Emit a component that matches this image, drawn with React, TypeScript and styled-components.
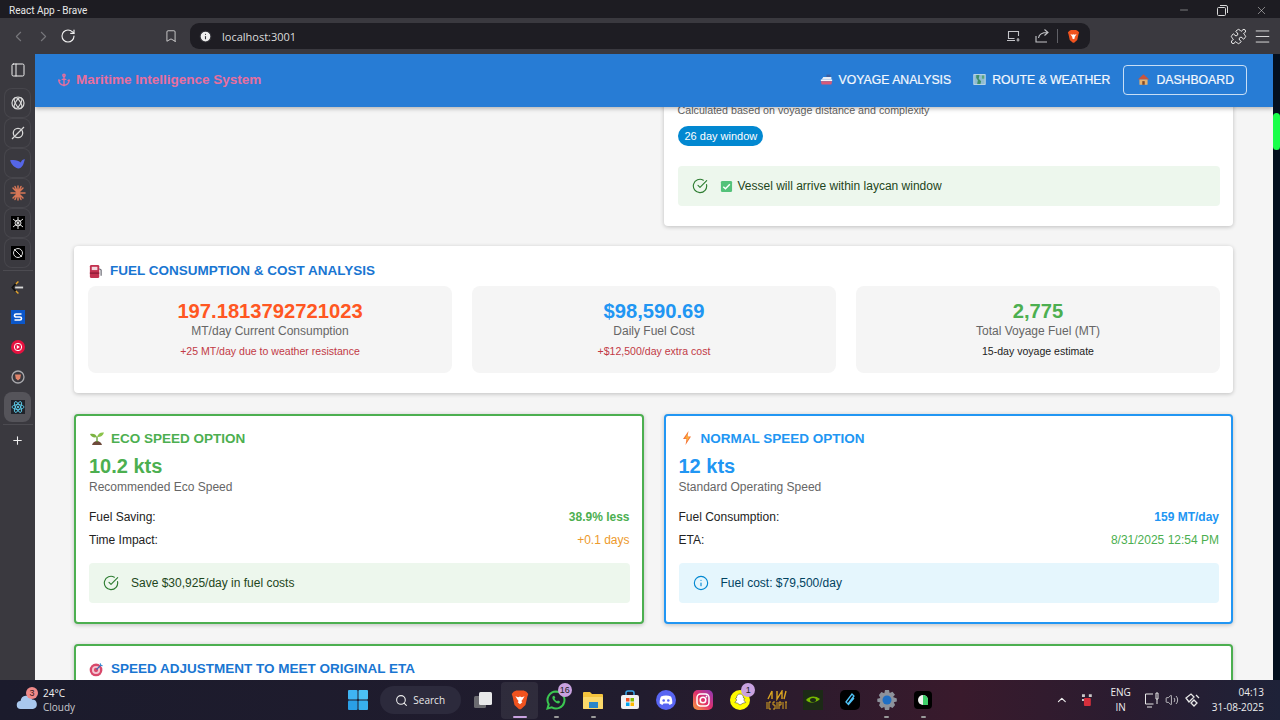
import React from "react"
import styled, { createGlobalStyle } from "styled-components"
import {
  Anchor,
  Bookmark,
  ChevronLeft,
  ChevronRight,
  ChevronUp,
  CircleCheckBig,
  Info,
  Menu,
  Minus,
  PanelLeft,
  Plus,
  Puzzle,
  RotateCw,
  Search,
  Volume2,
  X,
} from "lucide-react"

const GlobalStyle = createGlobalStyle`
  html, body {
    margin: 0;
    padding: 0;
    background: #f5f5f5;
    overflow: hidden;
  }
  * {
    box-sizing: border-box;
  }
`

// ******************** little drawings ********************
const BraveLion = ({ size = 16 }: { size?: number }) => (
  <svg width={size} height={size} viewBox="0 0 24 24">
    <path d="M5 3l3-1.500h8l3 1.500 2 2.500-1 3-2 9-5 4.500h-2l-5-4.500-2-9-1-3z" fill="#f0531f" />
    <path d="M7 8l3 1 2-.8 2 .8 3-1-2.500 4-1 1 1 1.500-2.500 2-2.500-2 1-1.500-1-1z" fill="#fff" />
  </svg>
)

const RestoreIcon = () => (
  <svg width="11" height="11" viewBox="0 0 11 11" fill="none" stroke="#d8d8d8" strokeWidth="1">
    <rect x="0.500" y="2.500" width="8" height="8" rx="1" />
    <path d="M3 .5h6a1.500 1.500 0 011.500 1.500v6" />
  </svg>
)

const CastIcon = () => (
  <svg width="14" height="12" viewBox="0 0 14 12" fill="none" stroke="#c4c4c8" strokeWidth="1.100">
    <path d="M11.500 6V1.500h-10v7h6M0 10.500h8M11 8v3.500M9.500 10h3" />
  </svg>
)

const ShareIcon = () => (
  <svg width="14" height="14" viewBox="0 0 14 14" fill="none" stroke="#c4c4c8" strokeWidth="1.100">
    <path d="M1 7v6h11M3.500 9C4 5.500 7 3.500 12.500 3.500M9.500 .5l3.500 3-3.500 3" />
  </svg>
)

const FuelPump = () => (
  <svg width="15" height="15" viewBox="0 0 16 16">
    <rect x="2" y="1" width="10" height="14" rx="1.500" fill="#c2314f" />
    <rect x="4" y="3" width="6" height="3.500" fill="#f3d7de" />
    <rect x="2" y="9" width="10" height="1.500" fill="#8f1d38" />
    <path d="M12 5l2 1.500v6" fill="none" stroke="#6e6e78" strokeWidth="1.300" />
  </svg>
)

const Seedling = () => (
  <svg width="16" height="16" viewBox="0 0 16 16">
    <path d="M3 15c1-3 3-4 5-4s4 1 5 4z" fill="#6d4a3a" />
    <path d="M8 12V7" stroke="#5a9a2e" strokeWidth="1.300" />
    <path d="M8 7C7 4 4 3 1 4c1 3 4 4 7 3z" fill="#7cb342" />
    <path d="M8 7c1-3 3-5 7-4.500C14 6 11 7.500 8 7z" fill="#8bc34a" />
  </svg>
)

const Bolt = () => (
  <svg width="16" height="16" viewBox="0 0 16 16">
    <path d="M9.500 1L4 9h3.500L6.500 15 12 6.500H8.500z" fill="#f4743b" />
    <path d="M9 3L6 8.500h2L7.500 12 10.500 7H8.500z" fill="#fbb03b" />
  </svg>
)

const Target = () => (
  <svg width="15" height="15" viewBox="0 0 16 16">
    <circle cx="7.500" cy="8.500" r="6.800" fill="#d9486b" />
    <circle cx="7.500" cy="8.500" r="4.300" fill="#f4c6d2" />
    <circle cx="7.500" cy="8.500" r="2.300" fill="#d9486b" />
    <path d="M8 8l5-5" stroke="#3b6fb5" strokeWidth="1.300" />
    <path d="M12 1.500l.5 2 2 .5" fill="none" stroke="#3b8fd5" strokeWidth="1.300" />
  </svg>
)

const Ship = () => (
  <svg width="13" height="13" viewBox="0 0 16 16">
    <rect x="8" y="2" width="5" height="3" fill="#3f5f9e" />
    <path d="M4 5h10v3H2z" fill="#e8edf5" />
    <path d="M1 8h14v2H1z" fill="#f4f4f8" />
    <path d="M1 10h14l-1 4H2z" fill="#d75a78" />
  </svg>
)

const MapPic = () => (
  <svg width="13" height="13" viewBox="0 0 16 16">
    <rect x="1" y="2" width="14" height="12" fill="#8fbcd0" />
    <path d="M4 2h4l-1 5 3 3-1 4H5l1-5-2-3z" fill="#3f8f6b" />
    <path d="M11 3h3v4h-3z" fill="#5aa57f" />
    <rect x="1" y="2" width="14" height="12" fill="none" stroke="#d5e4ea" />
  </svg>
)

const House = () => (
  <svg width="13" height="13" viewBox="0 0 16 16">
    <path d="M8 1.500L1 8h14z" fill="#c8553d" />
    <rect x="3" y="8" width="10" height="6.500" fill="#e8b06a" />
    <rect x="6.500" y="10" width="3" height="4.500" fill="#7d4a2c" />
  </svg>
)

const GreenCheck = () => (
  <svg width="13" height="13" viewBox="0 0 14 14">
    <rect x="1" y="1" width="12" height="12" rx="1.500" fill="#54c27a" />
    <path d="M3.500 7.200l2.400 2.300 4.700-5" fill="none" stroke="#fff" strokeWidth="1.500" />
  </svg>
)

const sideIcons: React.ReactNode[] = [
  <svg key="gpt" width="16" height="16" viewBox="0 0 16 16" fill="none" stroke="#d8d8d8" strokeWidth="1.200">
    <circle cx="8" cy="8" r="6" />
    <ellipse cx="8" cy="8" rx="6" ry="2.500" transform="rotate(60 8 8)" />
    <ellipse cx="8" cy="8" rx="6" ry="2.500" transform="rotate(-60 8 8)" />
  </svg>,
  <svg key="grok" width="16" height="16" viewBox="0 0 16 16" fill="none" stroke="#d8d8d8" strokeWidth="1.300">
    <circle cx="8" cy="8" r="4.700" />
    <path d="M2 14L14 2" />
  </svg>,
  <svg key="whale" width="17" height="17" viewBox="0 0 16 16">
    <path d="M1 5c2 6 7 9 10 7 3-2 3-6 4-8-2 0-3 1-4 3-2-2-6-3-10-2z" fill="#5566e8" />
  </svg>,
  <svg key="spark" width="16" height="16" viewBox="0 0 16 16" stroke="#d97757" strokeWidth="1.500" strokeLinecap="round">
    <path d="M8 1v14M1 8h14M3 3l10 10M13 3L3 13M5 1.500l6 13M11 1.500l-6 13" />
  </svg>,
  <svg key="square1" width="14" height="14" viewBox="0 0 14 14">
    <rect width="14" height="14" fill="#000" />
    <g fill="none" stroke="#ddd" strokeWidth="1">
      <circle cx="7" cy="7" r="3" />
      <path d="M2 3l10 8M12 3L2 11M7 1v12" />
    </g>
  </svg>,
  <svg key="square2" width="14" height="14" viewBox="0 0 14 14">
    <rect width="14" height="14" fill="#000" />
    <g fill="none" stroke="#ddd" strokeWidth="1">
      <circle cx="7" cy="7" r="4.500" />
      <path d="M3 3l8 8" />
    </g>
  </svg>,
]

const pinnedIcons: React.ReactNode[] = [
  <svg key="bow" width="15" height="15" viewBox="0 0 16 16" fill="none" strokeWidth="1.500">
    <path d="M9 1.500L6 4.500M9 14.500L6 11.500" stroke="#e6a52b" />
    <path d="M6 4L2.500 8 6 12" stroke="#111" strokeWidth="1.800" />
    <path d="M5.500 8H14" stroke="#d8d8d8" strokeWidth="2" />
  </svg>,
  <svg key="s" width="14" height="14" viewBox="0 0 14 14">
    <rect width="14" height="14" fill="#0b57c9" />
    <path d="M10.500 4H5a1 1 0 000 3h4a1 1 0 010 3H3.500" fill="none" stroke="#fff" strokeWidth="1.600" />
  </svg>,
  <svg key="music" width="14" height="14" viewBox="0 0 14 14">
    <circle cx="7" cy="7" r="7" fill="#e5113f" />
    <circle cx="7" cy="7" r="3.700" fill="none" stroke="#fff" />
    <path d="M5.800 5v4l3-2z" fill="#fff" />
  </svg>,
  <svg key="lion" width="14" height="14" viewBox="0 0 14 14">
    <circle cx="7" cy="7" r="6" fill="none" stroke="#a9a9ad" strokeWidth="1.300" />
    <path d="M4 4.500h6l-.8 4L7 10.500 4.800 8.500z" fill="#e0846a" />
  </svg>,
]

const ReactLogo = () => (
  <svg width="14" height="14" viewBox="0 0 14 14" fill="none" stroke="#61dafb" strokeWidth="0.800">
    <rect width="14" height="14" fill="#20232a" stroke="none" />
    <ellipse cx="7" cy="7" rx="6" ry="2.400" />
    <ellipse cx="7" cy="7" rx="6" ry="2.400" transform="rotate(60 7 7)" />
    <ellipse cx="7" cy="7" rx="6" ry="2.400" transform="rotate(-60 7 7)" />
    <circle cx="7" cy="7" r="1.100" fill="#61dafb" stroke="none" />
  </svg>
)

const WindowsLogo = () => (
  <svg width="20" height="20" viewBox="0 0 20 20">
    <rect x="0" y="0" width="9.500" height="9.500" rx="1" fill="#3fb4f2" />
    <rect x="10.500" y="0" width="9.500" height="9.500" rx="1" fill="#4cc2f5" />
    <rect x="0" y="10.500" width="9.500" height="9.500" rx="1" fill="#2a9fe6" />
    <rect x="10.500" y="10.500" width="9.500" height="9.500" rx="1" fill="#38b0ee" />
  </svg>
)

const taskIcons: { key: string; node: React.ReactNode; badge?: string; mark?: string }[] = [
  {
    key: "view",
    node: (
      <svg width="20" height="20" viewBox="0 0 20 20">
        <rect x="1" y="6" width="12" height="12" rx="1.500" fill="#6b6b70" />
        <rect x="6" y="2" width="13" height="13" rx="1.500" fill="#e8e8ea" />
      </svg>
    ),
  },
  { key: "brave", node: <BraveLion size={22} />, mark: "#c9a2e0" },
  {
    key: "whatsapp",
    node: (
      <svg width="20" height="20" viewBox="0 0 20 20">
        <path d="M10 1.500a8.500 8.500 0 00-7.300 12.800L1.500 18.500l4.300-1.100A8.500 8.500 0 1010 1.500z" fill="none" stroke="#3bc651" strokeWidth="2" />
        <path d="M7 6c-1 1-1 3 1 5s4 3 5.500 2l.5-1.500-2-1-1 .8c-1-.5-2-1.500-2.500-2.500l.8-1-1-2z" fill="#3bc651" />
      </svg>
    ),
    badge: "16",
    mark: "#9a9a9a",
  },
  {
    key: "files",
    node: (
      <svg width="22" height="22" viewBox="0 0 22 22">
        <path d="M1 4a1 1 0 011-1h6l2 2h10a1 1 0 011 1v13a1 1 0 01-1 1H2a1 1 0 01-1-1z" fill="#f5c43d" />
        <rect x="1" y="8" width="20" height="12" rx="1" fill="#fbd96a" />
        <rect x="7" y="13" width="9" height="6" fill="#2a86c9" />
      </svg>
    ),
    mark: "#9a9a9a",
  },
  {
    key: "store",
    node: (
      <svg width="20" height="20" viewBox="0 0 20 20">
        <rect x="1" y="5" width="18" height="14" rx="2" fill="#f1f1f3" />
        <path d="M6 5V3a2 2 0 012-2h4a2 2 0 012 2v2" fill="none" stroke="#38a5e8" strokeWidth="1.500" />
        <rect x="6" y="8" width="3.500" height="3.500" fill="#f25022" />
        <rect x="10.500" y="8" width="3.500" height="3.500" fill="#7fba00" />
        <rect x="6" y="12.500" width="3.500" height="3.500" fill="#00a4ef" />
        <rect x="10.500" y="12.500" width="3.500" height="3.500" fill="#ffb900" />
      </svg>
    ),
  },
  {
    key: "discord",
    node: (
      <svg width="20" height="20" viewBox="0 0 20 20">
        <circle cx="10" cy="10" r="10" fill="#5865f2" />
        <path d="M5 6.500c3-1.300 7-1.300 10 0 1 2 1.500 4.500 1.300 7-1.200.8-2.300 1.200-3 1.300l-.8-1.300H7.500l-.8 1.300c-.7-.1-1.800-.5-3-1.300C3.500 11 4 8.500 5 6.500z" fill="#fff" />
        <circle cx="7.700" cy="10.500" r="1.300" fill="#5865f2" />
        <circle cx="12.300" cy="10.500" r="1.300" fill="#5865f2" />
      </svg>
    ),
  },
  {
    key: "instagram",
    node: (
      <svg width="20" height="20" viewBox="0 0 20 20">
        <defs>
          <linearGradient id="insta" x1="0" y1="1" x2="1" y2="0">
            <stop offset="0" stopColor="#f9a03c" />
            <stop offset="0.5" stopColor="#e1306c" />
            <stop offset="1" stopColor="#8a3ab9" />
          </linearGradient>
        </defs>
        <rect width="20" height="20" rx="5" fill="url(#insta)" />
        <rect x="4" y="4" width="12" height="12" rx="3.500" fill="none" stroke="#fff" strokeWidth="1.500" />
        <circle cx="10" cy="10" r="2.800" fill="none" stroke="#fff" strokeWidth="1.500" />
        <circle cx="13.500" cy="6.500" r="0.900" fill="#fff" />
      </svg>
    ),
  },
  {
    key: "snap",
    node: (
      <svg width="20" height="20" viewBox="0 0 20 20">
        <circle cx="10" cy="10" r="10" fill="#fffc00" />
        <path d="M10 4c2.500 0 3.500 2 3.500 4l1.500.5-1.300 1.500 2 2.500-2.700.7L10 15l-2.500-1.800-2.700-.7 2-2.500L5.500 8.500 6.500 8C6.500 6 7.500 4 10 4z" fill="#fff" stroke="#333" strokeWidth="0.500" />
      </svg>
    ),
    badge: "1",
  },
  {
    key: "esports",
    node: (
      <svg width="22" height="20" viewBox="0 0 22 20" fill="none" stroke="#d9a321" strokeWidth="1.400">
        <path d="M6 1L2 9M6 1v8M11 1v8l5-8v8M20 1l-2 8" />
        <path d="M1 12v7M5 12H3v7h2M9 12H7v3h2v4H7M11 12v7M13 12h2v3h-2M13 12v7M17 12v7M19 12h2M20 12v7" strokeWidth="1" />
      </svg>
    ),
  },
  {
    key: "nvidia",
    node: (
      <svg width="20" height="20" viewBox="0 0 20 20">
        <rect width="20" height="20" fill="#1c2a16" />
        <path d="M3 10c3-4 9-5 14-1-4 4-10 5-14 1z" fill="#76b900" />
        <ellipse cx="10" cy="10" rx="3" ry="2" fill="#1c2a16" />
      </svg>
    ),
  },
  {
    key: "linear",
    node: (
      <svg width="20" height="20" viewBox="0 0 20 20">
        <rect width="20" height="20" rx="5" fill="#000" />
        <path d="M6 12l6-8 2 2-6 8zM8 15l6-7" fill="none" stroke="#4fc3f7" strokeWidth="1.300" />
      </svg>
    ),
  },
  {
    key: "settings",
    node: (
      <svg width="20" height="20" viewBox="0 0 20 20">
        <path d="M8 0h4l.7 3 2.800-1.300 2.500 3-2 2.300L19.800 8.500v3l-3 .7 1.300 2.800-2.500 3-2.800-1.300-.7 3.300H8l-.7-3-2.800 1.300-2.500-3 1.300-2.800-3-.7v-3l3-.7L1.900 5l2.500-3 2.900 1.300z" fill="#8d929b" />
        <circle cx="10" cy="10" r="4.500" fill="#1f6fc4" />
      </svg>
    ),
    mark: "#9a9a9a",
  },
  {
    key: "chat",
    node: (
      <svg width="18" height="18" viewBox="0 0 18 18">
        <rect width="18" height="18" rx="4" fill="#000" />
        <circle cx="9" cy="9" r="5" fill="#f2f2f2" />
        <path d="M9 4a5 5 0 015 5v5H9z" fill="#3ecf6a" />
      </svg>
    ),
    mark: "#9a9a9a",
  },
]

const WeatherCloud = () => (
  <svg width="22" height="16" viewBox="0 0 22 16">
    <path d="M5 15a4 4 0 01-.5-8A6 6 0 0116 5.500 4.800 4.800 0 0117 15z" fill="#a9c8ee" />
  </svg>
)

// ******************** page data ********************
const stats = [
  { value: "197.1813792721023", label: "MT/day Current Consumption", note: "+25 MT/day due to weather resistance", tone: "#ff5722", noteTone: "#c23a45" },
  { value: "$98,590.69", label: "Daily Fuel Cost", note: "+$12,500/day extra cost", tone: "#2196f3", noteTone: "#c23a45" },
  { value: "2,775", label: "Total Voyage Fuel (MT)", note: "15-day voyage estimate", tone: "#4caf50", noteTone: "#222222" },
]

export default function App() {
  return (
    <Screen>
      <GlobalStyle />
      <TitleBar>
        <TitleText>React App - Brave</TitleText>
        <WindowButtons>
          <Minus size={12} strokeWidth={1} />
          <RestoreIcon />
          <X size={13} strokeWidth={1} />
        </WindowButtons>
      </TitleBar>

      <Toolbar>
        <NavIcons>
          <ChevronLeft size={17} color="#77777c" strokeWidth={1.500} />
          <ChevronRight size={17} color="#77777c" strokeWidth={1.500} />
          <RotateCw size={16} color="#f0f0f0" strokeWidth={1.700} />
        </NavIcons>
        <Bookmark size={14} color="#d8d8d8" strokeWidth={1.500} />
        <AddressBar>
          <SiteInfo>
            <Info size={13} color="#303036" fill="#efefef" />
          </SiteInfo>
          <Url>localhost:3001</Url>
          <AddressTools>
            <CastWrap>
              <CastIcon />
            </CastWrap>
            <ShareIcon />
            <AddressDivider />
            <BraveLion size={15} />
          </AddressTools>
        </AddressBar>
        <ExtensionIcons>
          <Puzzle size={17} color="#efefef" strokeWidth={1.400} />
          <Menu size={19} color="#efefef" strokeWidth={1.100} />
        </ExtensionIcons>
      </Toolbar>

      <Body>
        <Sidebar>
          <SideSlot>
            <PanelLeft size={16} color="#efefef" strokeWidth={1.500} />
          </SideSlot>
          <SideGroup>
            {sideIcons.map((icon, i) => (
              <SideSlot key={i} $boxed>
                {icon}
              </SideSlot>
            ))}
          </SideGroup>
          <SideDivider />
          <PinnedGroup>
            {pinnedIcons.map((icon, i) => (
              <SideSlot key={i}>{icon}</SideSlot>
            ))}
            <SideSlot $active>
              <ReactLogo />
            </SideSlot>
          </PinnedGroup>
          <SideDivider />
          <SideSlot>
            <Plus size={13} color="#efefef" strokeWidth={2} />
          </SideSlot>
        </Sidebar>

        <Viewport>
          <AppBar>
            <Brand>
              <Anchor size={14} strokeWidth={2.400} />
              <BrandName>Maritime Intelligence System</BrandName>
            </Brand>
            <NavLinks>
              <NavLink>
                <Ship />
                VOYAGE ANALYSIS
              </NavLink>
              <NavLink>
                <MapPic />
                ROUTE &amp; WEATHER
              </NavLink>
              <NavLink $outlined>
                <House />
                DASHBOARD
              </NavLink>
            </NavLinks>
          </AppBar>

          <Page>
            <TopRow>
              <div />
              <LaycanCard>
                <Caption>Calculated based on voyage distance and complexity</Caption>
                <Chip>26 day window</Chip>
                <Alert $kind="success">
                  <CircleCheckBig size={16} color="#2e7d32" strokeWidth={1.700} />
                  <GreenCheck />
                  <span>Vessel will arrive within laycan window</span>
                </Alert>
              </LaycanCard>
            </TopRow>

            <Card>
              <CardTitle>
                <FuelPump />
                FUEL CONSUMPTION &amp; COST ANALYSIS
              </CardTitle>
              <StatGrid>
                {stats.map((s) => (
                  <StatBox key={s.label}>
                    <StatValue $tone={s.tone}>{s.value}</StatValue>
                    <StatLabel>{s.label}</StatLabel>
                    <StatNote $tone={s.noteTone}>{s.note}</StatNote>
                  </StatBox>
                ))}
              </StatGrid>
            </Card>

            <OptionGrid>
              <OptionCard $tone="#4caf50">
                <OptionTitle $tone="#4caf50">
                  <Seedling />
                  ECO SPEED OPTION
                </OptionTitle>
                <OptionSpeed $tone="#4caf50">10.2 kts</OptionSpeed>
                <OptionSub>Recommended Eco Speed</OptionSub>
                <InfoRows>
                  <InfoRow>
                    <span>Fuel Saving:</span>
                    <InfoValue $tone="#4caf50" $bold>38.9% less</InfoValue>
                  </InfoRow>
                  <InfoRow>
                    <span>Time Impact:</span>
                    <InfoValue $tone="#ed9a2d">+0.1 days</InfoValue>
                  </InfoRow>
                </InfoRows>
                <Alert $kind="success">
                  <CircleCheckBig size={16} color="#2e7d32" strokeWidth={1.700} />
                  <span>Save $30,925/day in fuel costs</span>
                </Alert>
              </OptionCard>

              <OptionCard $tone="#2196f3">
                <OptionTitle $tone="#2196f3">
                  <Bolt />
                  NORMAL SPEED OPTION
                </OptionTitle>
                <OptionSpeed $tone="#2196f3">12 kts</OptionSpeed>
                <OptionSub>Standard Operating Speed</OptionSub>
                <InfoRows>
                  <InfoRow>
                    <span>Fuel Consumption:</span>
                    <InfoValue $tone="#2196f3" $bold>159 MT/day</InfoValue>
                  </InfoRow>
                  <InfoRow>
                    <span>ETA:</span>
                    <InfoValue $tone="#4caf50">8/31/2025 12:54 PM</InfoValue>
                  </InfoRow>
                </InfoRows>
                <Alert $kind="info">
                  <Info size={16} color="#0288d1" strokeWidth={1.700} />
                  <span>Fuel cost: $79,500/day</span>
                </Alert>
              </OptionCard>
            </OptionGrid>

            <AdjustCard>
              <CardTitle>
                <Target />
                SPEED ADJUSTMENT TO MEET ORIGINAL ETA
              </CardTitle>
            </AdjustCard>
          </Page>
        </Viewport>
        <ScrollTrack>
          <ScrollThumb />
        </ScrollTrack>
      </Body>

      <Taskbar>
        <Weather>
          <WeatherIcon>
            <WeatherCloud />
            <WeatherBadge>3</WeatherBadge>
          </WeatherIcon>
          <WeatherText>
            <span>24°C</span>
            <WeatherSub>Cloudy</WeatherSub>
          </WeatherText>
        </Weather>
        <TaskCenter>
          <TaskSlot>
            <WindowsLogo />
          </TaskSlot>
          <SearchPill>
            <Search size={13} color="#eee" strokeWidth={2} />
            Search
          </SearchPill>
          {taskIcons.map((t) => (
            <TaskSlot key={t.key} $active={t.key === "brave"}>
              {t.node}
              {t.badge && <TaskBadge>{t.badge}</TaskBadge>}
              {t.mark && <RunMark $tone={t.mark} $wide={t.key === "brave"} />}
            </TaskSlot>
          ))}
        </TaskCenter>
        <Tray>
          <ChevronUp size={14} color="#eee" strokeWidth={2} />
          <svg width="12" height="14" viewBox="0 0 12 14">
            <rect x="3" y="5" width="7" height="8" rx="1" fill="#d62f3c" />
            <path d="M1 1h3v3H1zM8 1h3v3H8zM1 6h2v2H1z" fill="#c9c9c9" />
          </svg>
          <LangBox>
            <span>ENG</span>
            <span>IN</span>
          </LangBox>
          <TrayStatus>
            <svg width="15" height="16" viewBox="0 0 15 16" fill="none" stroke="#e8e8e8" strokeWidth="1">
              <path d="M9 2H1.500v10h8M3 15h5M12 1h2v6h-2zM13 7v5" />
            </svg>
            <Volume2 size={14} color="#e8e8e8" strokeWidth={1.300} />
            <svg width="15" height="14" viewBox="0 0 15 14" fill="none" stroke="#e8e8e8" strokeWidth="1.300">
              <path d="M1 5l5-4 3 3-5 5zM9 7l3 3-3 3-3-3z" />
              <path d="M11 2l3 3" />
            </svg>
          </TrayStatus>
          <Clock>
            <span>04:13</span>
            <span>31-08-2025</span>
          </Clock>
        </Tray>
      </Taskbar>
    </Screen>
  )
}

// ******************** window ********************
const Screen = styled.div`
  display: flex;
  flex-direction: column;
  width: 1280px;
  height: 720px;
  overflow: hidden;
  font-family: "Liberation Sans", Arial, sans-serif;
`

const TitleBar = styled.div`
  display: flex;
  align-items: center;
  justify-content: space-between;
  height: 18px;
  padding: 2px 0 0 9px;
  background: #1d1c22;
`

const TitleText = styled.span`
  font-family: Roboto, sans-serif;
  font-size: 10px;
  color: #e8e8e8;
`

const WindowButtons = styled.div`
  display: flex;
  align-items: center;
  gap: 27px;
  padding-right: 12px;
  color: #d8d8d8;
`

const Toolbar = styled.div`
  display: flex;
  align-items: center;
  height: 36px;
  padding-left: 10px;
  background: #3a393f;
`

const NavIcons = styled.div`
  display: flex;
  align-items: center;
  gap: 8px;
  width: 154px;
`

const AddressBar = styled.div`
  display: flex;
  align-items: center;
  width: 900px;
  height: 26px;
  margin-left: 12px;
  padding: 0 9px;
  border-radius: 9px;
  background: #1e1d23;
`

const SiteInfo = styled.span`
  display: flex;
  width: 23px;
`

const Url = styled.span`
  flex: 1;
  font-family: "Open Sans", sans-serif;
  font-size: 11px;
  color: #dcdcdc;
`

const AddressTools = styled.div`
  display: flex;
  align-items: center;
  gap: 10px;
`

const CastWrap = styled.span`
  display: flex;
  margin-right: 4px;
`

const AddressDivider = styled.span`
  width: 1px;
  height: 14px;
  margin: 0 -2px;
  background: #606066;
`

const ExtensionIcons = styled.div`
  display: flex;
  align-items: center;
  gap: 6px;
  margin-left: 140px;
`

const Body = styled.div`
  display: flex;
  flex: 1;
  min-height: 0;
`

// ******************** side panel ********************
const Sidebar = styled.aside`
  display: flex;
  flex-direction: column;
  align-items: center;
  flex: none;
  width: 35px;
  padding-top: 1px;
  background: #3a393f;
`

const SideGroup = styled.div`
  display: flex;
  flex-direction: column;
  margin-top: 3px;
`

const PinnedGroup = styled.div`
  display: flex;
  flex-direction: column;
  margin-top: 1px;
`

const SideSlot = styled.div<{ $boxed?: boolean; $active?: boolean }>`
  display: flex;
  align-items: center;
  justify-content: center;
  width: 27px;
  height: 30px;
  border-radius: 8px;
  ${(p) => p.$boxed && "box-shadow: inset 0 0 0 1px #47464c;"}
  ${(p) => p.$active && "background: #55545a;"}
`

const SideDivider = styled.div`
  width: 30px;
  height: 1px;
  margin-top: 2px;
  background: #4c4b51;
`

// ******************** page ********************
const Viewport = styled.main`
  position: relative;
  flex: 1;
  min-width: 0;
  overflow: hidden;
  background: #f5f5f5;
`

const ScrollTrack = styled.div`
  flex: none;
  width: 7px;
  padding-top: 59px;
  background: #04101f;
`

const ScrollThumb = styled.div`
  height: 37px;
  border-radius: 4px;
  background: #1aff4a;
`

const AppBar = styled.header`
  position: absolute;
  top: 0;
  left: 0;
  right: 0;
  z-index: 2;
  display: flex;
  align-items: center;
  justify-content: space-between;
  height: 53px;
  padding: 0 26px 2px 22px;
  background: #277cd5;
  box-shadow: 0 2px 4px rgba(0, 0, 0, 0.25);
`

const Brand = styled.div`
  display: flex;
  align-items: center;
  gap: 5px;
  color: #e76f9f;
`

const BrandName = styled.span`
  font-size: 13.500px;
  font-weight: 700;
`

const NavLinks = styled.nav`
  display: flex;
  align-items: center;
  gap: 13px;
`

const NavLink = styled.a<{ $outlined?: boolean }>`
  display: flex;
  align-items: center;
  gap: 6px;
  height: 30px;
  padding: ${(p) => (p.$outlined ? "0 12px 0 13px" : "0 0 0 9px")};
  border-radius: 4px;
  border: ${(p) => (p.$outlined ? "1px solid rgba(255, 255, 255, 0.75)" : "none")};
  font-size: 12.250px;
  -webkit-text-stroke: 0.2px #f4f8fd;
  color: #f4f8fd;
`

const Page = styled.div`
  display: flex;
  flex-direction: column;
  gap: 20px;
  padding: 0 40px 0 39px;
`

const TopRow = styled.div`
  display: grid;
  grid-template-columns: 1fr 1fr;
  gap: 20px;
`

const Card = styled.section`
  padding: 16px 13px 20px 14px;
  border-radius: 4px;
  background: #fff;
  box-shadow: 0 1px 4px rgba(0, 0, 0, 0.22);
`

const LaycanCard = styled(Card)`
  display: flex;
  flex-direction: column;
  align-items: flex-start;
  height: 172px;
  padding-top: 49px;
  border-radius: 0 0 4px 4px;
`

const Caption = styled.p`
  margin: 0;
  font-size: 10.700px;
  line-height: 14px;
  color: #616161;
`

const Chip = styled.span`
  display: flex;
  align-items: center;
  height: 20px;
  margin: 9px 0 20px;
  padding: 0 6px 0 7px;
  border-radius: 10px;
  background: #0288d1;
  font-size: 11px;
  color: #fff;
`

const Alert = styled.div<{ $kind: "success" | "info" }>`
  display: flex;
  align-items: center;
  gap: 5px;
  align-self: stretch;
  height: 40px;
  padding: 0 14px;
  border-radius: 4px;
  background: ${(p) => (p.$kind === "success" ? "#edf7ed" : "#e5f6fd")};
  font-size: 12px;
  color: ${(p) => (p.$kind === "success" ? "#1e4620" : "#014361")};
  & > svg:first-child {
    margin-right: 7px;
  }
`

const CardTitle = styled.h2`
  display: flex;
  align-items: center;
  gap: 7px;
  margin: 0 0 6px;
  font-size: 13.500px;
  line-height: 18px;
  font-weight: 700;
  color: #1976d2;
`

const StatGrid = styled.div`
  display: grid;
  grid-template-columns: repeat(3, 1fr);
  gap: 20px;
`

const StatBox = styled.div`
  display: flex;
  flex-direction: column;
  align-items: center;
  height: 87px;
  padding-top: 14px;
  border-radius: 8px;
  background: #f5f5f5;
`

const StatValue = styled.div<{ $tone: string }>`
  font-size: 20.200px;
  line-height: 22px;
  font-weight: 700;
  color: ${(p) => p.$tone};
`

const StatLabel = styled.div`
  margin-top: 1px;
  font-size: 12px;
  line-height: 16px;
  color: #666;
`

const StatNote = styled.div<{ $tone: string }>`
  margin-top: 5px;
  font-size: 10.550px;
  line-height: 14px;
  color: ${(p) => p.$tone};
`

const OptionGrid = styled.div`
  display: grid;
  grid-template-columns: 1fr 1fr;
  gap: 20px;
  margin-top: 1px;
`

const OptionCard = styled.section<{ $tone: string }>`
  display: flex;
  flex-direction: column;
  height: 210px;
  padding: 13px 12px 19px 13px;
  border: 2px solid ${(p) => p.$tone};
  border-radius: 4px;
  background: #fff;
  box-shadow: 0 1px 4px rgba(0, 0, 0, 0.22);
`

const OptionTitle = styled.h3<{ $tone: string }>`
  display: flex;
  align-items: center;
  gap: 6px;
  margin: 0;
  height: 18px;
  font-size: 13.500px;
  font-weight: 700;
  color: ${(p) => p.$tone};
`

const OptionSpeed = styled.div<{ $tone: string }>`
  margin-top: 7px;
  font-size: 20px;
  line-height: 24px;
  font-weight: 700;
  color: ${(p) => p.$tone};
`

const OptionSub = styled.div`
  margin-top: 1px;
  font-size: 12px;
  line-height: 16px;
  color: #666;
`

const InfoRows = styled.div`
  display: flex;
  flex-direction: column;
  gap: 7px;
  margin: 14px 0 auto;
`

const InfoRow = styled.div`
  display: flex;
  justify-content: space-between;
  font-size: 12px;
  line-height: 16px;
  color: #222;
`

const InfoValue = styled.span<{ $tone: string; $bold?: boolean }>`
  font-weight: ${(p) => (p.$bold ? 700 : 400)};
  color: ${(p) => p.$tone};
`

const AdjustCard = styled(Card)`
  height: 60px;
  border: 2px solid #4caf50;
  padding: 14px 13px;
`

// ******************** taskbar ********************
const Taskbar = styled.footer`
  display: flex;
  align-items: center;
  flex: none;
  height: 40px;
  padding: 0 16px;
  background: linear-gradient(90deg, #1b1b2c 0%, #211c2e 50%, #391a2c 75%, #2a1c30 88%, #1e2238 100%);
`

const Weather = styled.div`
  display: flex;
  align-items: center;
  gap: 5px;
  flex: none;
  width: 324px;
`

const WeatherIcon = styled.div`
  position: relative;
  display: flex;
  margin-top: 4px;
`

const WeatherBadge = styled.span`
  position: absolute;
  top: -7px;
  left: 10px;
  width: 12px;
  height: 12px;
  border-radius: 50%;
  background: #f08a8a;
  font-size: 9px;
  line-height: 12px;
  text-align: center;
  color: #3a1a1a;
`

const WeatherText = styled.div`
  display: flex;
  flex-direction: column;
  font-family: "Open Sans", sans-serif;
  font-size: 10px;
  line-height: 14px;
  color: #f0f0f0;
`

const WeatherSub = styled.span`
  color: #c8c8cc;
`

const TaskCenter = styled.div`
  display: flex;
  align-items: center;
  flex: none;
  width: 618px;
`

const TaskSlot = styled.div<{ $active?: boolean }>`
  position: relative;
  display: flex;
  align-items: center;
  justify-content: center;
  flex: none;
  width: 36.700px;
  height: 37px;
  border-radius: 4px;
  background: ${(p) => (p.$active ? "rgba(255, 255, 255, 0.07)" : "transparent")};
`

const TaskBadge = styled.span`
  position: absolute;
  top: 1px;
  right: 3px;
  min-width: 14px;
  height: 14px;
  border-radius: 7px;
  background: #c9a2e0;
  font-size: 9px;
  line-height: 14px;
  text-align: center;
  color: #222;
`

const RunMark = styled.span<{ $tone: string; $wide?: boolean }>`
  position: absolute;
  bottom: 1px;
  left: 50%;
  width: ${(p) => (p.$wide ? "14px" : "5px")};
  height: 2px;
  margin-left: ${(p) => (p.$wide ? "-7px" : "-2.500px")};
  border-radius: 1px;
  background: ${(p) => p.$tone};
`

const SearchPill = styled.div`
  display: flex;
  align-items: center;
  justify-content: center;
  gap: 5px;
  flex: none;
  width: 81px;
  height: 28px;
  margin: 0 4px 0 3px;
  border-radius: 14px;
  background: #2c2a3c;
  font-family: "Open Sans", sans-serif;
  font-size: 10px;
  color: #e8e8e8;
`

const Tray = styled.div`
  display: flex;
  align-items: center;
  flex: 1;
  min-width: 0;
  gap: 12px;
  padding-left: 97px;
`

const LangBox = styled.div`
  display: flex;
  flex-direction: column;
  align-items: center;
  margin-left: 6px;
  font-family: "Open Sans", sans-serif;
  font-size: 10px;
  line-height: 15px;
  color: #eee;
`

const TrayStatus = styled.div`
  display: flex;
  align-items: center;
  gap: 6px;
  margin-left: 1px;
`

const Clock = styled.div`
  display: flex;
  flex-direction: column;
  align-items: flex-end;
  flex: none;
  margin-left: auto;
  font-family: "Open Sans", sans-serif;
  font-size: 10px;
  line-height: 15px;
  white-space: nowrap;
  color: #eee;
`
